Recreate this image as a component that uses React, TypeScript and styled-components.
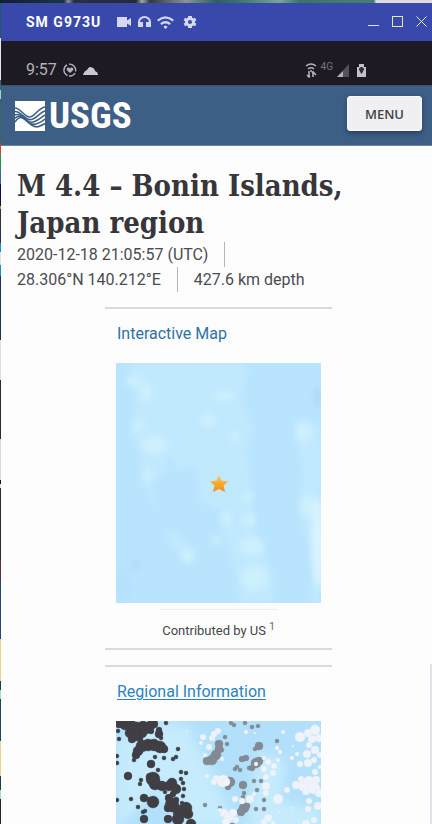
import React from "react";
import styled, { createGlobalStyle } from "styled-components";

const GlobalStyle = createGlobalStyle`
  * { box-sizing: border-box; }
  body { margin: 0; background: #1c1a24; font-family: Roboto, sans-serif; }
`;

const Desktop = styled.div`
  height: 100vh;
  padding: 3px 0 0 1px;
  display: flex;
  background:
    linear-gradient(90deg, #10202f 0, #1b3444 64px, #8b8f92 68px, #26323f 74px, #202c3b 136px, #a5a59c 142px, #2c3b42 150px, #8a9494 186px, #2f5f60 216px, #3d7370 240px, #7aa3a0 280px, #3c726c 300px, #4b7f6f 374px, transparent 376px) top / 100% 3px no-repeat,
    linear-gradient(90deg, #dcdcdc, #dcdcdc) top / 100% 3px no-repeat,
    linear-gradient(180deg, #1c5a68 0 38px, #e8e8e8 38px 80px, #2d6c70 80px 90px, #8fe0b8 90px 99px, #2f6a66 99px 143px, #d8402e 143px 155px, #149a50 155px 171px, #3a66a8 171px 184px, #10104a 184px 206px, #d98a20 206px 209px, #26344e 209px 243px, #1292d8 243px 252px, #e4e0e0 252px 265px, #1292d8 265px 276px, #20305c 276px 340px, #e0dedc 340px 380px, #262c34 380px 439px, #dad8d6 439px 480px, #14161a 480px 484px, #e4e4e4 484px 488px, #262c34 488px 560px, #50304a 560px 580px, #1c4c74 580px 639px, #ecd084 639px 681px, #1c3c5c 681px 690px, #96e6c0 690px 699px, #1c4468 699px 741px, #ecd084 741px 776px, #28345c 776px 790px, #96e6c0 790px 799px, #22262e 799px);
`;

const Phone = styled.main`
  position: relative;
  flex: 1;
  min-width: 0;
  display: flex;
  flex-direction: column;
  overflow: hidden;
  background: #fefdfe;
`;

const TitleBar = styled.header`
  flex: none;
  height: 38px;
  padding: 0 4px 0 25px;
  display: flex;
  align-items: center;
  background: #3949ab;
  color: #ffffff;
`;

const DeviceName = styled.span`
  font-size: 14px;
  font-weight: 700;
  letter-spacing: 1px;
`;

const DeviceIcons = styled.div`
  display: flex;
  align-items: center;
  gap: 6px;
  margin-left: 16px;
  color: #d5d9f0;
`;

const WindowControls = styled.div`
  display: flex;
  gap: 12px;
  margin-left: auto;
`;

const IconButton = styled.button`
  display: flex;
  padding: 0;
  border: 0;
  background: none;
  color: inherit;
`;

const StatusBar = styled.div`
  flex: none;
  height: 45px;
  padding: 14px 62px 0 25px;
  display: flex;
  align-items: center;
  gap: 6px;
  background: #1d1a24;
  border-bottom: 1px solid #494c5d;
  color: #b5b1b8;
`;

const Clock = styled.span`
  font-size: 16px;
  line-height: 20px;
`;

const StatusRight = styled.div`
  display: flex;
  align-items: center;
  gap: 4px;
  margin-left: auto;
`;

const NetworkType = styled.span`
  font-size: 10px;
  line-height: 12px;
  margin-bottom: 6px;
  color: #77737d;
`;

const SiteHeader = styled.header`
  flex: none;
  height: 60px;
  padding: 0 10px 4px 14px;
  display: flex;
  align-items: center;
  justify-content: space-between;
  background: #3d5e85;
  border-bottom: 1px solid #6a87a2;
`;

const Brand = styled.a`
  display: flex;
  align-items: center;
  gap: 4px;
  padding-top: 4px;
  color: #ffffff;
  text-decoration: none;
`;

const BrandName = styled.span`
  font-family: "Roboto Condensed", "Open Sans Condensed", "Liberation Sans Narrow", "Liberation Sans", sans-serif;
  font-size: 37px;
  line-height: 40px;
  font-weight: 700;
`;

const MenuButton = styled.button`
  width: 75px;
  height: 35px;
  padding: 0;
  border: 1px solid #fafafa;
  border-radius: 3px;
  background: #f0eff1;
  box-shadow: 0 2px 4px rgba(20, 30, 50, 0.5);
  color: #444347;
  font: 600 13px/20px "Open Sans", sans-serif;
`;

const Content = styled.div`
  flex: 1;
  min-height: 0;
  overflow: hidden;
  padding: 22px 12px 0 16px;
`;

const Heading = styled.h1`
  margin: 0;
  font: 700 29px/37px "DejaVu Serif Condensed", "DejaVu Serif", serif;
  color: #36363b;
`;

const Facts = styled.ul`
  margin: 0 0 15px;
  padding: 0 48px 0 0;
  display: flex;
  flex-wrap: wrap;
  list-style: none;
  font-size: 16px;
  line-height: 25px;
  color: #4b4b50;
`;

const Fact = styled.li`
  padding-right: 16px;
  margin-right: 16px;
  border-right: 1px solid #b5b4b8;
  &:last-child { border: 0; margin: 0; padding: 0; }
`;

const Card = styled.section`
  width: 56%;
  min-width: 227px;
  max-width: 480px;
  margin: 0 auto 15px;
  border-top: 2px solid #dadadd;
  border-bottom: 2px solid #dadadd;
`;

const CardTitle = styled.h2`
  margin: 0;
  padding: 12px 12px 17px;
  font-size: 16px;
  line-height: 25px;
  font-weight: 400;
`;

const TitleLink = styled.a<{ $underlined?: boolean }>`
  color: ${(p) => (p.$underlined ? "#2b84bd" : "#2d72a5")};
  text-decoration: ${(p) => (p.$underlined ? "underline" : "none")};
  text-decoration-thickness: 1px;
  text-underline-offset: 2px;
`;

const MapFrame = styled.div`
  margin: 0 11px;
  height: 240px;
  background: #b9e4fe;
  svg { display: block; width: 100%; height: 100%; }
`;

const Caption = styled.p`
  margin: 6px 54px 0;
  padding: 11px 0 7px;
  border-top: 1px solid #efedf0;
  font-size: 13px;
  line-height: 20px;
  text-align: center;
  white-space: nowrap;
  color: #454549;
  sup { font-size: 10px; line-height: 0; color: #666468; }
`;

const ScrollThumb = styled.div`
  position: absolute;
  right: 0;
  bottom: 0;
  width: 2px;
  height: 160px;
  background: #e4dfea;
`;

const InteractiveMap = () => (
  <svg viewBox="0 0 205 240" preserveAspectRatio="xMidYMid slice" role="img" aria-label="Epicenter map">
    <defs>
      <filter id="soft" x="-30%" y="-30%" width="160%" height="160%"><feGaussianBlur stdDeviation="3" /></filter>
      <linearGradient id="gold" x1="0" y1="0" x2="0" y2="1">
        <stop offset="0" stopColor="#f6cf63" /><stop offset="0.5" stopColor="#fba92a" /><stop offset="1" stopColor="#ee8c1c" />
      </linearGradient>
    </defs>
    <rect width="205" height="240" fill="#b9e4fe" />
    <g filter="url(#soft)" fill="#c1e9fe">
      <path d="M12 0H132L126 38 138 68 130 92 122 140 105 148 86 138 78 102 62 108 54 88 48 112 34 122 42 148 26 120 26 94 14 70 20 40Z" />
      <path d="M104 92 132 95 139 175 155 205 158 240H124L120 210 106 165Z" />
      <path d="M178 56 205 62V240H194L200 205 184 150 187 108Z" />
      <path d="M46 168 60 170 80 188 74 202 60 188Z" />
    </g>
    <g filter="url(#soft)" fill="#cdf0fd">
      <ellipse cx="18" cy="18" rx="9" ry="5" /><ellipse cx="30" cy="30" rx="6" ry="9" />
      <ellipse cx="23" cy="63" rx="5" ry="5" /><ellipse cx="38" cy="82" rx="13" ry="9" />
      <ellipse cx="108" cy="33" rx="9" ry="5" /><ellipse cx="119" cy="74" rx="4" ry="4" />
      <ellipse cx="92" cy="58" rx="7" ry="6" /><ellipse cx="32" cy="112" rx="5" ry="5" />
      <ellipse cx="132" cy="134" rx="5" ry="5" /><ellipse cx="110" cy="156" rx="5" ry="6" />
      <ellipse cx="133" cy="157" rx="6" ry="6" /><ellipse cx="100" cy="177" rx="5" ry="4" />
      <ellipse cx="136" cy="183" rx="12" ry="9" /><ellipse cx="139" cy="215" rx="13" ry="12" />
      <ellipse cx="71" cy="193" rx="6" ry="6" /><ellipse cx="192" cy="143" rx="8" ry="11" />
      <ellipse cx="188" cy="70" rx="8" ry="10" /><ellipse cx="202" cy="180" rx="6" ry="45" fill="#dbf4fe" />
    </g>
    <g filter="url(#soft)" fill="#add9f8"><ellipse cx="202" cy="34" rx="4" ry="11" /><ellipse cx="20" cy="202" rx="5" ry="4" /><ellipse cx="8" cy="222" rx="8" ry="18" opacity=".3" /></g>
    <path d="M103 112 105.500 117.500 112 118.500 107.500 122.500 109 129 103 126 97 129 98.500 122.500 94 118.500 100.500 117.500Z" fill="url(#gold)" />
  </svg>
);

const deep: number[][] = [
  [3,3,4],[9,4,5],[15,5,6],[21,7,6],[27,5,5],[34,5,5],[38,3,4],[14,12,5],[20,15,5],[26,12,5],[16,18,4],[30,9,4],[35,10,3],[24,18,3],[2,10,2],[3,18,2],
  [22,30,5],[26,25,6],[32,24,6],[38,24,6],[44,26,6],[48,28,4],[20,34,4],
  [43,13,4],[43,9,3],[45,17,2],[62,28,2],[50,2,2],[1,35,2],[1,42,2],[39,36,2],[48,37,2],[57,38,2],[60,36,2],[18,39,2],[35,43,4],[42,49,2],[12,55,4],
  [65,51,2],[70,52,2],[25,59,2],[24,63,2],[37,58,7],[39,63,6],[34,56,4],[46,65,5],[56,62,5],[60,68,5],[53,65,5],[57,73,3],[65,58,2],[67,62,2],[68,68,2],[67,75,2],
  [49,71,2],[28,77,4],[37,81,6],[32,78,2],[15,78,2],[1,79,2],[22,86,2],[53,77,4],[56,84,7],[52,87,4],[64,91,7],[70,87,6],[72,93,5],[62,98,6],[29,90,2],[27,91,2],[28,98,4],[52,98,4],[60,79,3],[66,82,2],[75,103,5],[41,109,4],[58,110,4],[20,116,3]
];
const grey: number[][] = [
  [103,23,4],[103,28,4],[100,34,5],[96,39,5],[91,40,4],[106,29,2],[109,16,2],[111,23,2],[118,4,2],[115,2,2],[129,2,2],[136,6,2],[142,5,2],[143,25,4],[139,28,2],[161,20,2],
  [126,38,3],[130,37,3],[140,42,5],[143,40,4],[136,47,3],[124,49,2],[119,48,2],[121,46,2],[133,47,2],[114,61,5],[112,66,3],[127,64,4],[138,60,2],[145,60,2],[127,76,2],[141,69,2],[148,79,2],[128,87,5],[125,91,4],[131,85,3],[140,88,2],[148,88,2],[89,84,2],[104,87,2],[128,72,2],[116,106,4],[146,108,3]
];
const pale: number[][] = [
  [71,10,1],[87,16,3],[96,17,3],[102,10,3],[98,13,3],[85,22,2],[106,38,2],[93,26,3],[89,34,2],[130,11,2],[139,12,1],[100,57,3],[107,60,6],[110,61,4],[98,61,3],[91,55,2],
  [119,78,3],[134,78,4],[138,73,2],[140,43,2],[152,41,3],[158,45,3],[148,48,3],[150,56,3],[150,65,4],[157,52,3],[162,39,2],[164,31,2],[161,27,2],[148,37,2],[150,72,3],[171,69,3],[162,78,5],[176,37,2],[167,11,2],[177,25,1],
  [184,16,5],[192,12,4],[199,9,5],[196,18,4],[203,17,4],[193,24,3],[199,29,4],[204,34,3],[191,33,4],[184,43,3],[192,42,4],[198,39,3],[185,58,3],[180,64,4],[187,65,5],[193,61,6],[200,59,4],[198,67,6],[190,70,4],[203,72,4],[193,80,3],[202,85,4],[192,88,3],[199,51,3],[204,46,2],[181,33,2],[175,87,1],
  [108,92,4],[113,96,5],[117,92,4],[104,89,2],[120,99,3],[110,101,4],[126,80,3],[152,97,4],[148,101,3],[157,102,2],[163,91,1],[190,103,4],[198,99,3]
];

const Dots = ({ items, fill, stroke }: { items: number[][]; fill: string; stroke: string }) => (
  <g fill={fill} stroke={stroke} strokeWidth=".4">
    {items.map(([x, y, r], i) => <circle key={i} cx={x} cy={y} r={r} />)}
  </g>
);

const RegionalMap = () => (
  <svg viewBox="0 0 205 240" preserveAspectRatio="xMidYMin slice" role="img" aria-label="Regional seismicity map">
    <defs><filter id="haze"><feGaussianBlur stdDeviation="5" /></filter></defs>
    <rect width="205" height="240" fill="#b2e0fb" />
    <g filter="url(#haze)" fill="#c5ebfc">
      <path d="M0 20 40 0 72 5 100 60 120 105H70L40 70 0 110Z" /><path d="M142 30 170 40 165 80 205 90V120H130Z" />
    </g>
    <Dots items={grey} fill="#858990" stroke="#718b9e" />
    <Dots items={pale} fill="#f1f3fa" stroke="#d7ebf8" />
    <Dots items={deep} fill="#423d42" stroke="#35485b" />
  </svg>
);

const UsgsMark = () => (
  <svg width="30" height="30" viewBox="0 0 30 30" aria-hidden="true">
    <rect width="30" height="30" fill="#fff" />
    <g fill="none" stroke="#3d5e85" strokeWidth="1.600">
      <path d="M0 7C5 7 9 15 14 16S23 7 30 6" />
      <path d="M0 10.500C5 10 9 17 14 18.500S24 12 30 10" />
      <path d="M0 14C4 12 8 16 13 20S25 17 30 14" />
      <path d="M0 17.500C4 13 8 16 13 21S25 22 30 18" />
      <path d="M0 21C5 14 8 16 14 22S24 26 30 22.500" />
    </g>
  </svg>
);

export default function App() {
  return (
    <>
      <GlobalStyle />
      <Desktop>
        <Phone>
          <TitleBar>
            <DeviceName>SM G973U</DeviceName>
            <DeviceIcons>
              <svg width="15" height="10" viewBox="0 0 15 10" fill="currentColor"><path d="M0 0h10v3.500L14 1v8l-4-2.500V10H0Z" /></svg>
              <svg width="13" height="12" viewBox="0 0 13 12" fill="currentColor"><path d="M0 11V6a6.500 6 0 0 1 13 0v5H8V6h3a4.500 4 0 0 0-9 0h3v5Z" /></svg>
              <svg width="17" height="13" viewBox="0 0 24 18" fill="currentColor"><path d="M0 5q12-10 24 0l-2 2.500q-10-8-20 0ZM4.500 10q7.500-6 15 0l-2 2.500q-5.500-4-11 0ZM9 15q3-2.500 6 0l-3 3Z" /></svg>
              <IconButton type="button" aria-label="Settings">
                <svg width="20" height="16" viewBox="0 0 24 24" fill="currentColor"><path d="M19.400 13a7.800 7.800 0 0 0 0-2l2.200-1.600-2.200-3.800-2.500 1a8 8 0 0 0-1.700-1L14.800 3H9.200l-.4 2.600a8 8 0 0 0-1.700 1l-2.500-1-2.200 3.800L4.600 11a7.800 7.800 0 0 0 0 2l-2.200 1.600 2.200 3.800 2.500-1a8 8 0 0 0 1.700 1l.4 2.600h5.600l.4-2.600a8 8 0 0 0 1.700-1l2.500 1 2.200-3.800ZM12 15a3 3 0 1 1 0-6 3 3 0 0 1 0 6Z" /></svg>
              </IconButton>
            </DeviceIcons>
            <WindowControls>
              <IconButton type="button" aria-label="Minimize"><svg width="12" height="12" stroke="#e2e5f6"><path d="M0 9.500h11" /></svg></IconButton>
              <IconButton type="button" aria-label="Maximize"><svg width="12" height="12" stroke="#e2e5f6" fill="none"><rect x=".5" y=".5" width="10" height="10" /></svg></IconButton>
              <IconButton type="button" aria-label="Close"><svg width="12" height="12" stroke="#e2e5f6"><path d="M.5 .5l10 10M10.500 .5l-10 10" /></svg></IconButton>
            </WindowControls>
          </TitleBar>
          <StatusBar>
            <Clock>9:57</Clock>
            <svg width="14" height="14" viewBox="0 0 14 14" fill="none" stroke="currentColor" strokeWidth="1.400"><path d="M4 1.800A6 6 0 0 0 4.500 12.500M6 1.200a6 6 0 0 1 6.500 7.300M12 10a6 6 0 0 1-6 3" /><path d="M3.500 6Q4 4 6 4.500L7 5.500l1-1Q10 4 10.500 6 10 8 7 10 4 8 3.500 6Z" fill="currentColor" stroke="none" /></svg>
            <svg width="15" height="9" viewBox="0 0 15 9" fill="#cbc8ce"><path d="M0 9Q1 5 4 4 6-1 10 2q2 1 2 3 3 1 3 4Z" /></svg>
            <StatusRight>
              <svg width="12" height="15" viewBox="0 0 12 15" fill="none" stroke="currentColor" strokeWidth="1.600"><path d="M1 3Q6-1 11 3M3 6q3-2.500 6 0M5 8h2" /><path d="M4 8v6M2 12l2 2 1-1M8 14V8M7 10l1-1 3 3" /></svg>
              <NetworkType>4G</NetworkType>
              <svg width="12" height="13" viewBox="0 0 12 13"><path d="M0 13 12 0v13Z" fill="#55515b" /><path d="M0 13 6 7v6Z" fill="#b5b1b8" /></svg>
              <svg width="17" height="14" viewBox="0 0 17 14"><path d="M6 4V1h5v3h2v10H4V4Z" fill="#c4c1c8" /><path d="M8.500 4Q11 4 11 6.500 10 9 8.500 11 7 9 6 6.500 6 4 8.500 4Z" fill="#34303b" /></svg>
            </StatusRight>
          </StatusBar>
          <SiteHeader>
            <Brand href="#home"><UsgsMark /><BrandName>USGS</BrandName></Brand>
            <MenuButton type="button">MENU</MenuButton>
          </SiteHeader>
          <Content>
            <Heading>M 4.4 – Bonin Islands, Japan region</Heading>
            <Facts>
              <Fact>2020-12-18 21:05:57 (UTC)</Fact>
              <Fact>28.306°N 140.212°E</Fact>
              <Fact>427.6 km depth</Fact>
            </Facts>
            <Card>
              <CardTitle><TitleLink href="#map">Interactive Map</TitleLink></CardTitle>
              <MapFrame><InteractiveMap /></MapFrame>
              <Caption>Contributed by US <sup>1</sup></Caption>
            </Card>
            <Card>
              <CardTitle><TitleLink href="#region" $underlined>Regional Information</TitleLink></CardTitle>
              <MapFrame><RegionalMap /></MapFrame>
            </Card>
          </Content>
          <ScrollThumb />
        </Phone>
      </Desktop>
    </>
  );
}
